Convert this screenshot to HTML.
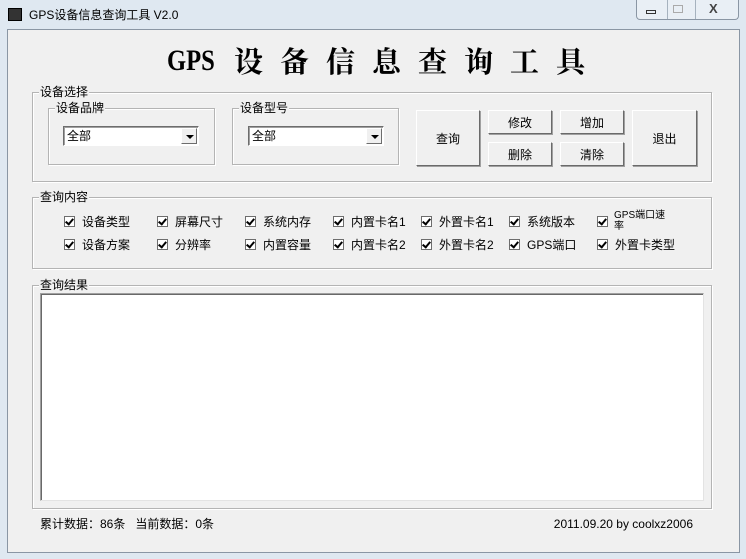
<!DOCTYPE html>
<html><head><meta charset="utf-8"><style>
*{margin:0;padding:0;box-sizing:border-box}
body{width:746px;height:559px;overflow:hidden;position:relative;background:#dfe8f1;font-family:"Liberation Sans","Noto Sans CJK SC",sans-serif;font-size:12px;color:#000}
.a{position:absolute}
.client{left:7px;top:29px;width:733px;height:524px;background:#f0f0f0;border:1px solid #8a96a4}
.grp{position:absolute;border:1px solid #b4b4b4;box-shadow:inset 1px 1px 0 #fff,1px 1px 0 #fff}
.lbl{position:absolute;background:#f0f0f0;padding:0 1px;font-size:12px;line-height:14px;top:-8px;left:6px}
.combo{position:absolute;height:20px;background:#fff;border:1px solid;border-color:#6d6d6d #fff #fff #6d6d6d;box-shadow:inset 1px 1px 0 #a0a0a0;font-size:12px;line-height:18px;padding-left:3px}
.arr{position:absolute;right:1px;top:1px;width:16px;height:16px;background:#f0f0f0;border:1px solid;border-color:#fff #6d6d6d #6d6d6d #fff}
.arr:after{content:"";position:absolute;left:4px;top:6px;border:4px solid transparent;border-top:4px solid #000;border-bottom:0}
.btn{position:absolute;background:#f0f0f0;border:1px solid;border-color:#fff #6a6a6a #6a6a6a #fff;box-shadow:1px 1px 0 #a0a0a0;display:flex;align-items:center;justify-content:center;font-size:12px}
.cb{position:absolute;font-size:12px;line-height:13px;white-space:nowrap}
.cb i{display:inline-block;width:11px;height:11px;border:1px solid #6d6d6d;background:#fff;vertical-align:-1px;margin-right:7px;position:relative}
.cb i:after{content:"";position:absolute;left:2px;top:0px;width:3px;height:6px;border:solid #000;border-width:0 2px 2px 0;transform:rotate(40deg)}
.t{position:absolute;top:41px;font-family:'Noto Serif CJK SC','Liberation Serif',serif;font-size:29px;font-weight:bold;line-height:40px}
</style></head><body>
<div class="a" style="left:8px;top:8px;width:14px;height:13px;background:#333;border:1px solid #000"></div>
<div class="a" style="left:29px;top:7px;font-size:12px;line-height:16px">GPS设备信息查询工具 V2.0</div>
<div class="a" style="left:636px;top:0;width:103px;height:20px;border:1px solid #8a96a4;border-top:0;border-radius:0 0 4px 4px;background:#e9eff5"></div>
<div class="a" style="left:667px;top:0;width:1px;height:19px;background:#a6b2be"></div>
<div class="a" style="left:695px;top:0;width:1px;height:19px;background:#a6b2be"></div>
<div class="a" style="left:646px;top:10px;width:10px;height:4px;border:1px solid #333"></div>
<div class="a" style="left:673px;top:5px;width:10px;height:8px;border:1px solid #aaa"></div>
<div class="a" style="left:709px;top:1px;font-size:13px;color:#444;font-weight:bold">X</div>
<div class="a client"></div>
<div class="t" style="left:167px;font-family:'Liberation Serif',serif;font-size:30px;transform:scaleX(0.82);transform-origin:left">GPS</div>
<div class="t" style="left:234px;letter-spacing:17px;white-space:nowrap">设备信息查询工具</div>

<div class="grp" style="left:32px;top:92px;width:680px;height:90px"><span class="lbl">设备选择</span></div>
<div class="grp" style="left:48px;top:108px;width:167px;height:57px"><span class="lbl">设备品牌</span></div>
<div class="combo" style="left:63px;top:126px;width:136px">全部<span class="arr"></span></div>
<div class="grp" style="left:232px;top:108px;width:167px;height:57px"><span class="lbl">设备型号</span></div>
<div class="combo" style="left:248px;top:126px;width:136px">全部<span class="arr"></span></div>
<div class="btn" style="left:416px;top:110px;width:64px;height:56px">查询</div>
<div class="btn" style="left:488px;top:110px;width:64px;height:24px">修改</div>
<div class="btn" style="left:488px;top:142px;width:64px;height:24px">删除</div>
<div class="btn" style="left:560px;top:110px;width:64px;height:24px">增加</div>
<div class="btn" style="left:560px;top:142px;width:64px;height:24px">清除</div>
<div class="btn" style="left:632px;top:110px;width:65px;height:56px">退出</div>

<div class="grp" style="left:32px;top:197px;width:680px;height:72px"><span class="lbl">查询内容</span></div>
<div class="cb" style="left:64px;top:216px"><i></i>设备类型</div>
<div class="cb" style="left:157px;top:216px"><i></i>屏幕尺寸</div>
<div class="cb" style="left:245px;top:216px"><i></i>系统内存</div>
<div class="cb" style="left:333px;top:216px"><i></i>内置卡名1</div>
<div class="cb" style="left:421px;top:216px"><i></i>外置卡名1</div>
<div class="cb" style="left:509px;top:216px"><i></i>系统版本</div>
<div class="cb" style="left:597px;top:216px"><i></i></div>
<div class="a" style="left:614px;top:210px;font-size:10px;line-height:11px;width:60px">GPS端口速率</div>
<div class="cb" style="left:64px;top:239px"><i></i>设备方案</div>
<div class="cb" style="left:157px;top:239px"><i></i>分辨率</div>
<div class="cb" style="left:245px;top:239px"><i></i>内置容量</div>
<div class="cb" style="left:333px;top:239px"><i></i>内置卡名2</div>
<div class="cb" style="left:421px;top:239px"><i></i>外置卡名2</div>
<div class="cb" style="left:509px;top:239px"><i></i>GPS端口</div>
<div class="cb" style="left:597px;top:239px"><i></i>外置卡类型</div>

<div class="grp" style="left:32px;top:285px;width:680px;height:224px"><span class="lbl">查询结果</span></div>
<div class="a" style="left:40px;top:293px;width:664px;height:208px;background:#fff;border:1px solid;border-color:#a0a0a0 #e3e3e3 #e3e3e3 #a0a0a0;box-shadow:inset 1px 1px 0 #696969"></div>

<div class="a" style="left:40px;top:517px;line-height:14px">累计数据：86条&nbsp;&nbsp;&nbsp;当前数据：0条</div>
<div class="a" style="right:53px;top:517px;line-height:14px">2011.09.20 by coolxz2006</div>
</body></html>
